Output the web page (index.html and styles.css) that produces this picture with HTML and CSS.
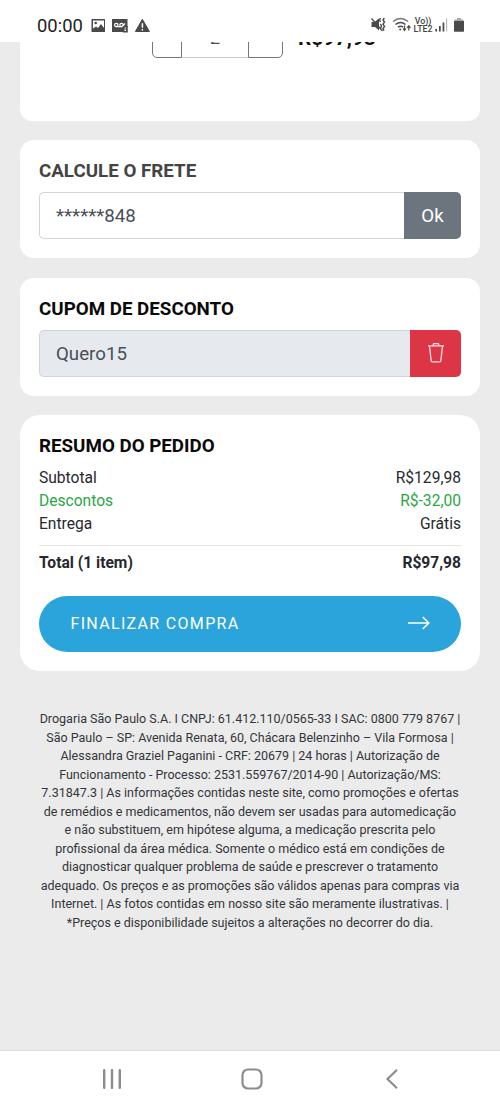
FILE: index.html
```html
<!DOCTYPE html>
<html lang="pt-BR">
<head>
<meta charset="utf-8">
<title>Carrinho</title>
<link rel="stylesheet" href="styles.css">
</head>
<body>
<div class="phone">
  <header class="status">
    <span class="clock">00:00</span>
    <svg class="status-left" width="60" height="16" viewBox="0 0 60 16">
      <path fill="#4a4a4a" fill-rule="evenodd" d="M1 1h12.500q.5 0 .5.500v12q0 .5-.5.500H1q-.5 0-.5-.5v-12Q.500 1 1 1zM2 2.500v8l3-2 2 1.500 3-4 3 4V2.500z"/>
      <circle cx="4.700" cy="5" r="1.300" fill="#4a4a4a"/>
      <path fill="#4a4a4a" d="M21 1h15.500v8H33v5H21z"/>
      <g fill="none" stroke="#fff" stroke-width="1.200"><circle cx="25.300" cy="7" r="1.700"/><circle cx="30.500" cy="7" r="1.700"/><path d="M25 8.700h6l3-3.200"/></g>
      <path fill="#4a4a4a" d="M31.800 8h5v6.500h-5z"/>
      <path fill="#fff" d="M33.500 9.500h1.600v1h-1.600zM33.500 11.500h1.600v1.500h-1.600z"/>
      <path fill="#4a4a4a" stroke="#4a4a4a" stroke-linejoin="round" d="M51.400 1.300l7 12.200h-14z"/>
      <path stroke="#fff" stroke-width="1.500" d="M51.400 5.200v4.500M51.400 10.900v1.500"/>
    </svg>
    <div class="status-right">
      <svg width="15" height="16" viewBox="0 0 15 16">
        <path fill="#4a4a4a" d="M.5 5h3L8 1.500v12L4 10H.5z"/>
        <path d="M.5 1.500l11 12.500" stroke="#4a4a4a" stroke-width="1.300"/>
        <path d="M9.500 1l-1 2 1 2M13.300 1l-1.300 2 1.500 2-1.500 2.200 1.500 2.200-1.500 2.200 1 2M9.500 7l1 2-1 2.500" fill="none" stroke="#4a4a4a" stroke-width="1.400"/>
      </svg>
      <svg class="wifi" width="20" height="16" viewBox="0 0 20 16">
        <g fill="none" stroke="#777" stroke-width="1.500"><path d="M1 4.500q7.500-6 15 0"/><path stroke="#4a4a4a" d="M3.500 7.500q5-4 10 0M6 10.200q2.500-2 5 0"/></g>
        <circle cx="8.200" cy="12.500" r="1" fill="#4a4a4a"/>
        <path d="M12.500 8.500v4.500M11 11.500l1.500 2 1.500-2M16.800 13.500V9M15.200 10.800l1.600-2 1.600 2" fill="none" stroke="#4a4a4a" stroke-width="1.200"/>
      </svg>
      <span class="lte"><span>Vo))</span><span>LTE2</span></span>
      <svg class="signal" width="13" height="16" viewBox="0 0 13 16">
        <path fill="#4a4a4a" d="M.3 12h1.700v2.500H.3zM4 9h1.700v5.500H4zM7.600 5.500h1.700v9H7.600z"/><path fill="#bbb" d="M11 1.500h1.200v13H11z"/>
      </svg>
      <svg class="battery" width="10" height="16" viewBox="0 0 10 16">
        <path fill="#aaa" d="M3 1h4v1.500h2.500v2h-9v-2H3z"/><path fill="#4a4a4a" d="M0 4h10v10q0 .7-.7.700H.7q-.7 0-.7-.7z"/>
      </svg>
    </div>
  </header>

  <main class="page">
    <section class="card product">
      <div class="stepper"><span class="step minus"></span><span class="qty">2</span><span class="step plus">+</span></div>
      <strong class="price">R$97,98</strong>
    </section>

    <section class="card">
      <h2 class="title muted">CALCULE O FRETE</h2>
      <div class="group"><div class="field">******848</div><button class="btn ok">Ok</button></div>
    </section>

    <section class="card">
      <h2 class="title">CUPOM DE DESCONTO</h2>
      <div class="group"><div class="field disabled">Quero15</div>
        <button class="btn remove" aria-label="Remover">
          <svg width="18" height="22" viewBox="0 0 18 22" fill="none" stroke="#ffdfe2" stroke-width="1.300" stroke-linejoin="round"><path d="M1 3.800h16M2.500 4l1.700 15q.1.900 1 .9h7.600q.9 0 1-.9l1.700-15M6 3.700l.6-2.100h4.800l.6 2.100"/></svg>
        </button></div>
    </section>

    <section class="card summary">
      <h2 class="title">RESUMO DO PEDIDO</h2>
      <div class="row"><span>Subtotal</span><span>R$129,98</span></div>
      <div class="row discount"><span>Descontos</span><span>R$-32,00</span></div>
      <div class="row"><span>Entrega</span><span>Grátis</span></div>
      <div class="row total"><span>Total (1 item)</span><span>R$97,98</span></div>
      <button class="checkout"><span>FINALIZAR COMPRA</span>
        <svg width="24" height="14" viewBox="0 0 24 14" fill="none" stroke="#fff" stroke-width="1.600"><path d="M1 7h21M15.800 1l6 6-6 6"/></svg>
      </button>
    </section>

    <footer class="legal">Drogaria São Paulo S.A. I CNPJ: 61.412.110/0565-33 I SAC: 0800 779 8767 |<br>São Paulo – SP: Avenida Renata, 60, Chácara Belenzinho – Vila Formosa |<br>Alessandra Graziel Paganini - CRF: 20679 | 24 horas | Autorização de<br>Funcionamento - Processo: 2531.559767/2014-90 | Autorização/MS:<br>7.31847.3 | As informações contidas neste site, como promoções e ofertas<br>de remédios e medicamentos, não devem ser usadas para automedicação<br>e não substituem, em hipótese alguma, a medicação prescrita pelo<br>profissional da área médica. Somente o médico está em condições de<br>diagnosticar qualquer problema de saúde e prescrever o tratamento<br>adequado. Os preços e as promoções são válidos apenas para compras via<br>Internet. | As fotos contidas em nosso site são meramente ilustrativas. |<br>*Preços e disponibilidade sujeitos a alterações no decorrer do dia.</footer>
  </main>

  <nav class="nav">
    <svg width="20" height="22" viewBox="0 0 20 22" stroke="#8c8c8c" stroke-width="2.400" stroke-linecap="round"><path d="M2.200 2.200v17.600M10 2.200v17.600M17.800 2.200v17.600"/></svg>
    <svg width="22" height="22" viewBox="0 0 22 22" fill="none" stroke="#8c8c8c" stroke-width="2.200"><rect x="1.500" y="1.500" width="19" height="19" rx="5.500"/></svg>
    <svg width="20" height="22" viewBox="0 0 20 22" fill="none" stroke="#8c8c8c" stroke-width="2.200"><path d="M15 1.800L5.500 11l9.500 9.200"/></svg>
  </nav>
</div>
</body>
</html>
```
FILE: styles.css
```css
* { box-sizing: border-box; }
body { margin: 0; font-family: Roboto, sans-serif; color: #26292d; }
.phone { width: 500px; height: 1111px; display: flex; flex-direction: column; background: #ebebeb; overflow: hidden; }

.status { height: 42px; flex: none; background: #fff; display: flex; align-items: flex-start; padding: 17px 36px 0 37px; }
.clock { font-size: 18.400px; line-height: 18px; width: 54px; color: #222; }
.status-left { margin-top: 1px; }
.status-right { display: flex; margin-left: auto; }
.status-right svg { flex: none; }
.wifi { margin-left: 6px; }
.lte { display: flex; flex-direction: column; align-items: center; width: 20px; margin-left: 1px; font-size: 8.800px; line-height: 8px; font-weight: 500; color: #444; }
.signal { margin-left: 2px; }
.battery { margin-left: 6px; }

.page { flex: 1; min-height: 0; padding: 0 20px; display: flex; flex-direction: column; }
.card { flex: none; background: #fff; border-radius: 14px; padding: 21px 19px 19px; margin-bottom: 19.500px; height: 118px; }
.product { height: 79px; margin-bottom: 19px; border-radius: 0 0 12px 12px; padding: 0 0 63px 132px; display: flex; align-items: flex-end; overflow: hidden; }
.stepper { display: flex; width: 131px; height: 46px; flex: none; }
.step { border: 1px solid #777; text-align: center; color: #777; font-size: 20px; }
.minus { width: 30px; border-radius: 0 0 0 5px; }
.plus { width: 35px; border-radius: 0 0 5px 0; line-height: 46px; }
.qty { flex: 1; border: solid #ccc; border-width: 1px 0; text-align: center; font-size: 18px; line-height: 50px; color: #495057; }
.price { margin: 0 0 8px 15px; font-size: 20.700px; line-height: 24px; color: #111; }

.title { margin: 0 0 11px; font-size: 18.750px; line-height: 20px; font-weight: 700; color: #0a0a0a; }
.muted { color: #444; }
.group { display: flex; height: 47px; }
.field { flex: 1; border: 1px solid #ced4da; border-right: 0; border-radius: 5px 0 0 5px; padding-left: 16px; font-size: 18.700px; line-height: 46px; color: #495057; }
.disabled { background: #e6eaee; }
.btn { border: 0; padding: 0; border-radius: 0 5px 5px 0; color: #fff; font: 18.700px Roboto, sans-serif; display: flex; align-items: center; justify-content: center; }
.ok { width: 57px; background: #6c757d; }
.remove { width: 51px; background: #dc3545; }

.summary { height: 256px; border-radius: 20px; margin-bottom: 39px; }
.row { display: flex; justify-content: space-between; font-size: 15.600px; line-height: 23.200px; }
.discount { color: #28a745; }
.total { margin-top: 8px; border-top: 1px solid #e8e8e8; padding-top: 6px; font-weight: 700; }
.checkout { width: 100%; height: 56px; margin-top: 21px; border: 0; border-radius: 28px; background: #2ba4db; color: #fff; display: flex; align-items: center; justify-content: space-between; padding: 0 30px 1px 31.500px; font: 16px Roboto, sans-serif; letter-spacing: 1.320px; }

.legal { font-size: 12.500px; line-height: 18.500px; text-align: center; white-space: nowrap; color: #33363a; }

.nav { flex: none; height: 61px; background: #fff; border-top: 1px solid #ddd; display: flex; justify-content: space-between; padding: 17px 98px 0 102px; }
```
